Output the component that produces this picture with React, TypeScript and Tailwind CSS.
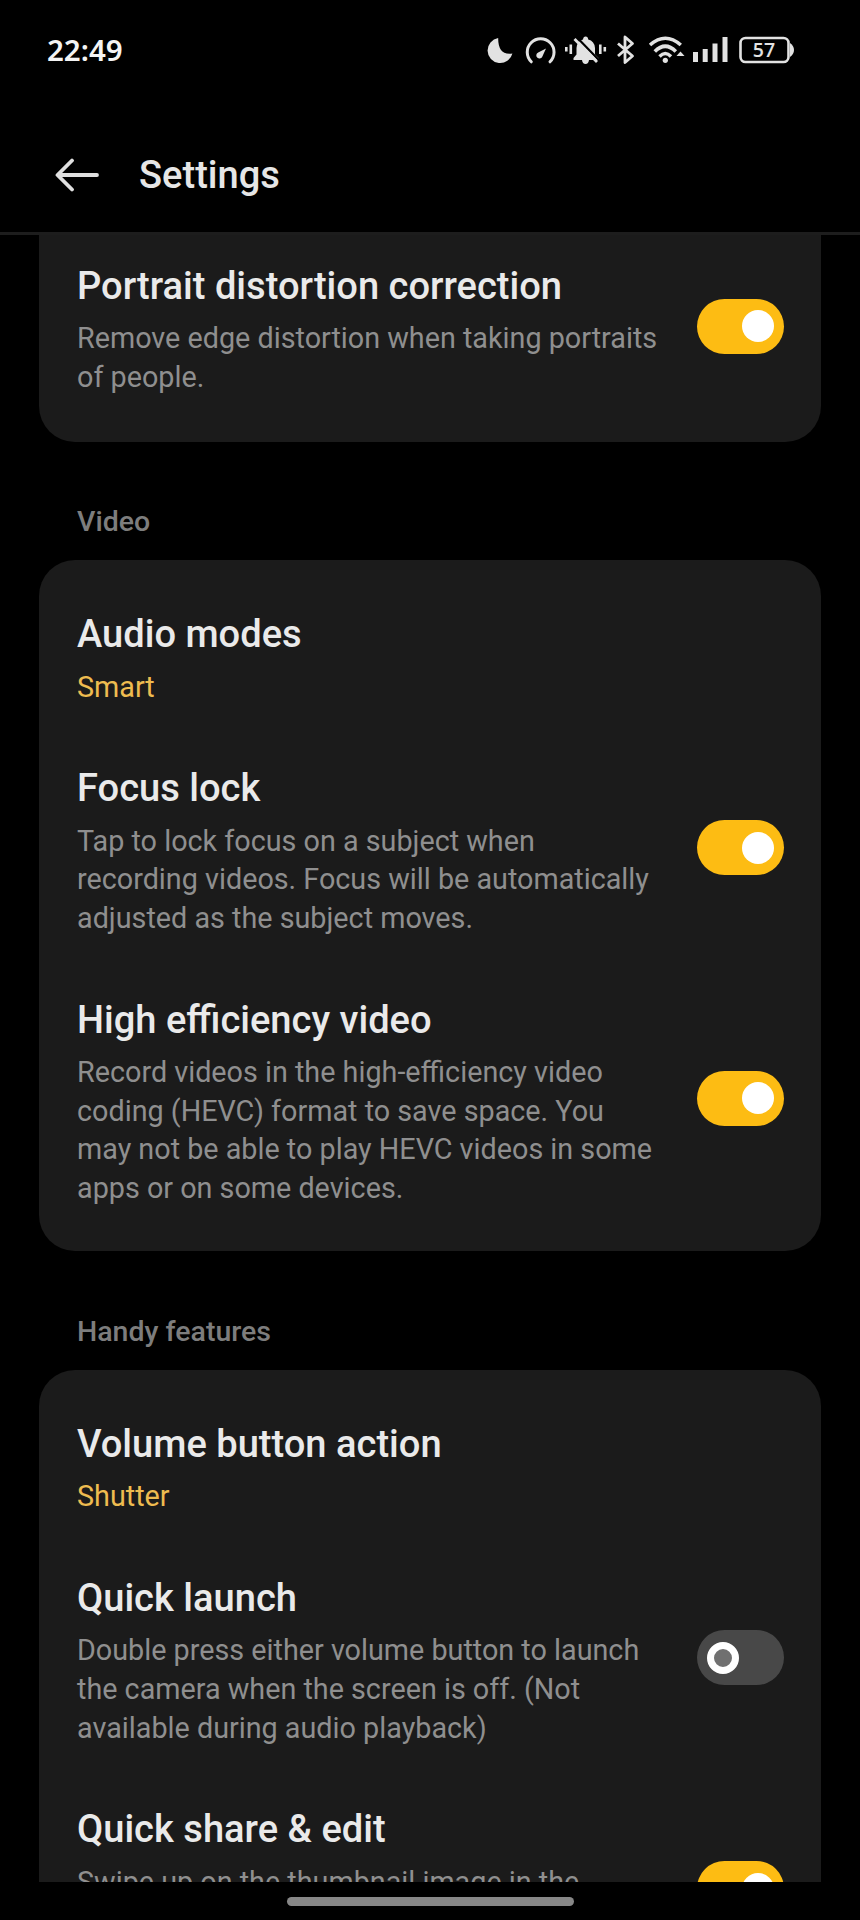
import type { ReactNode } from "react"

type Item = {
  title: string
  desc?: string[]
  value?: string
  on?: boolean
}

const photoItems: Item[] = [
  {
    title: "Portrait distortion correction",
    desc: ["Remove edge distortion when taking portraits", "of people."],
    on: true,
  },
]

const videoItems: Item[] = [
  { title: "Audio modes", value: "Smart" },
  {
    title: "Focus lock",
    desc: [
      "Tap to lock focus on a subject when",
      "recording videos. Focus will be automatically",
      "adjusted as the subject moves.",
    ],
    on: true,
  },
  {
    title: "High efficiency video",
    desc: [
      "Record videos in the high-efficiency video",
      "coding (HEVC) format to save space. You",
      "may not be able to play HEVC videos in some",
      "apps or on some devices.",
    ],
    on: true,
  },
]

const handyItems: Item[] = [
  { title: "Volume button action", value: "Shutter" },
  {
    title: "Quick launch",
    desc: [
      "Double press either volume button to launch",
      "the camera when the screen is off. (Not",
      "available during audio playback)",
    ],
    on: false,
  },
  {
    title: "Quick share & edit",
    desc: ["Swipe up on the thumbnail image in the"],
    on: true,
  },
]

const StatusIcons = () => (
  <svg width="320" height="40" viewBox="480 30 320 40" fill="none" stroke="#e2e2e2" className="shrink-0">
    {/* do not disturb */}
    <path d="M498.2 38A12.6 12.6 0 1 0 512.4 53.5Q504 54.5 501 50Q498 45.5 498.2 38Z" fill="#e2e2e2" stroke="none" />

    {/* speed */}
    <path d="M531.3 61.8A13.4 13.4 0 1 1 550 61.8" strokeWidth="3" strokeLinecap="round" />
    <path d="M546 48.5L542.6 56A3.2 3.2 0 1 1 538.2 52.4Z" fill="#e2e2e2" stroke="none" />

    {/* muted bell */}
    <path d="M573.5 58L576.5 54.5V48Q577 41 583 39.5Q583.3 36.5 585.6 36.5Q588 36.5 588.2 39.5Q594.5 41 595 48V54.5L598.5 58V60H573.5Z" fill="#e2e2e2" stroke="none" />
    <path d="M582 60H589Q588.5 64 585.5 64Q582.5 64 582 60Z" fill="#e2e2e2" stroke="none" />
    <path d="M577 37.5L599.3 60.5" stroke="#000" strokeWidth="2.2" />
    <path d="M574.5 39L597 62" strokeWidth="2.8" />
    <path d="M566.3 47V51.5M570.8 44.5V54M600.3 44.5V54M604.8 47V51.5" strokeWidth="2.6" />

    {/* bluetooth */}
    <path d="M618 43.5L632.5 56L625 62.5V37L632.5 43.5L618 56" strokeWidth="2.8" strokeLinejoin="round" />

    {/* wifi */}
    <path d="M650 45Q665.3 31.5 680.8 45" strokeWidth="3.6" />
    <path d="M654.8 51.5Q665.3 41 675.8 51.5" strokeWidth="3.6" />
    <path d="M659.5 56.5Q665.3 50.5 671 56.5" strokeWidth="3.4" />
    <circle cx="665.3" cy="60.3" r="2.6" fill="#e2e2e2" stroke="none" />
    <path d="M676.5 56L680.5 51.5L684.5 56Z" fill="#e2e2e2" stroke="none" />

    {/* signal */}
    <path d="M695.5 62V52M705.2 62V49M715 62V43.5M725 62V37" strokeWidth="5" />

    {/* battery */}
    <rect x="740.5" y="38" width="48" height="24" rx="5" strokeWidth="2.6" />
    <path d="M790 43Q794 46 794 50Q794 54 790 57Z" fill="#e2e2e2" stroke="none" />
    <text x="764" y="57.2" textAnchor="middle" fill="#e2e2e2" stroke="none" className="font-['Open_Sans',sans-serif] text-[19.5px] font-semibold">57</text>
  </svg>
)

const Toggle = ({ on }: { on: boolean }) => (
  <button
    role="switch"
    aria-checked={on}
    className={`flex h-[55px] w-[87px] shrink-0 items-center rounded-full px-2.5 ${on ? "justify-end bg-[#fdbc13]" : "justify-start bg-[#484848]"}`}
  >
    {on ? (
      <span className="size-8 rounded-full bg-white" />
    ) : (
      <span className="size-8 rounded-full border-[7px] border-white bg-[#707070]" />
    )}
  </button>
)

const Row = ({ item, className = "" }: { item: Item; className?: string }) => (
  <div className={`flex items-center justify-between py-[33px] ${className}`}>
    <div className="-mb-[7px] self-start">
      <h2 className="text-[38.1px] leading-[46px] font-medium whitespace-nowrap text-[#eaeaea]">{item.title}</h2>
      <div className="mt-[10.4px] text-[28.75px] leading-[38.6px] whitespace-nowrap text-[#8f8f8f]">
        {item.value && <p className="text-[#eebc50]">{item.value}</p>}
        {item.desc?.map((line) => <p key={line}>{line}</p>)}
      </div>
    </div>
    {item.on !== undefined && <Toggle on={item.on} />}
  </div>
)

const Card = ({ items, className = "rounded-[36px] py-[18px]", lastRow }: { items: Item[]; className?: string; lastRow?: string }) => (
  <div className={`mx-[39px] bg-[#1b1b1b] pr-[37px] pl-[38px] ${className}`}>
    {items.map((item, i) => (
      <Row key={item.title} item={item} className={i === items.length - 1 ? lastRow : ""} />
    ))}
  </div>
)

const SectionTitle = ({ children }: { children: ReactNode }) => (
  <h3 className="flex h-[118.8px] items-center pt-[42px] pl-[77px] text-[28.5px] leading-9 font-medium text-[#7d7d7d]">{children}</h3>
)

const App = () => {
  return (
    <div className="flex h-[1920px] w-[860px] flex-col overflow-hidden bg-black font-[Roboto,sans-serif]">
      <div className="flex h-[100px] items-center justify-between pr-[60px] pl-[47px]">
        <span className="font-['Noto_Sans',sans-serif] text-[29.5px] leading-10 font-semibold text-[#f4f4f4]">22:49</span>
        <StatusIcons />
      </div>

      <header className="flex h-[135px] items-center gap-[39px] border-b-3 border-[#1d1d1d] pt-[17px] pl-[55px]">
        <svg width="45" height="34" viewBox="0 0 45 34" fill="none" stroke="#e0e0e0" strokeWidth="3.8" strokeLinecap="round" strokeLinejoin="round">
          <path d="M42 17H3M17 2.5L2.5 17L17 31.5" />
        </svg>
        <h1 className="text-[38.1px] leading-[46px] font-medium text-[#e6e6e6]">Settings</h1>
      </header>

      <main className="h-[1647px] overflow-hidden">
        <div className="-mt-[22px]">
          <Card items={photoItems} className="rounded-b-[36px] pt-[17px] pb-[19px]" />
        </div>
        <SectionTitle>Video</SectionTitle>
        <Card items={videoItems} />
        <SectionTitle>Handy features</SectionTitle>
        <Card items={handyItems} lastRow="h-[231px]" />
      </main>

      <footer className="flex h-[38px] items-center justify-center">
        <div className="h-[9px] w-[287px] rounded-full bg-[#878787]" />
      </footer>
    </div>
  )
}

export default App
